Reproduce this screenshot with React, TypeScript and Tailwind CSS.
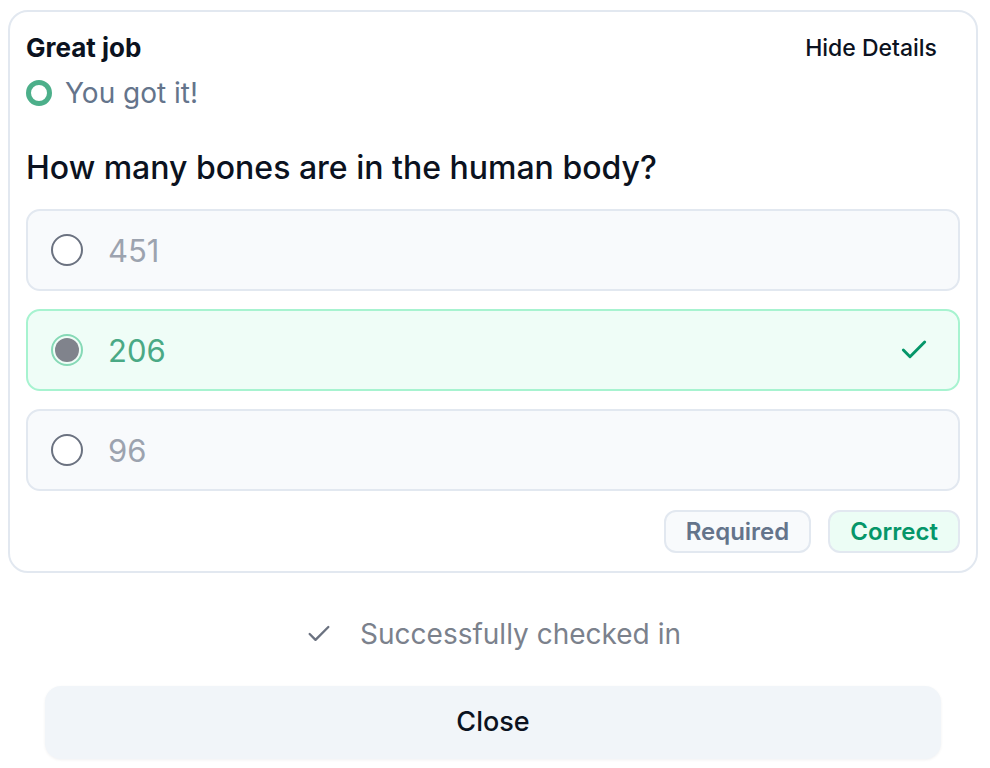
import React from 'react';
import { Check } from 'lucide-react';

const options = [
  { id: '451', label: '451' },
  { id: '206', label: '206' },
  { id: '96', label: '96' },
];

export default function App() {
  const selected = '206';

  return (
    <div className="min-h-screen bg-white pl-[8px] pr-[12px] pt-[10px]" style={{ fontFamily: 'Inter, "Noto Sans", sans-serif' }}>
      <div className="rounded-[20px] border-2 border-[#e2e8f0] px-[16px] pb-[18px] pt-[18px]">
        <div className="flex items-start justify-between">
          <div>
            <h2 className="text-[26px] font-bold leading-[36px] text-[#0b1220]">Great job</h2>
            <div className="mt-[10px] flex items-center gap-[13px]">
              <span className="inline-block h-[26px] w-[26px] rounded-full border-[5px] border-[#4caf8a]" />
              <span className="text-[28px] leading-[34px] text-[#64748b]">You got it!</span>
            </div>
          </div>
          <button type="button" className="mr-[23px] text-[23px] font-medium leading-[36px] text-[#0b1220]">
            Hide Details
          </button>
        </div>

        <p className="mt-[38px] text-[32px] font-medium leading-[40px] text-[#0b1220]">How many bones are in the human body?</p>

        <div className="mt-[21px] flex flex-col gap-[18px]">
          {options.map((option) => {
            const active = option.id === selected;
            return (
              <div
                key={option.id}
                className={`flex h-[82px] items-center rounded-[14px] border-2 pl-[23px] pr-[28px] ${
                  active ? 'border-[#a7f3d0] bg-[#effdf7]' : 'border-[#e2e8f0] bg-[#f8fafc]'
                }`}
              >
                {active ? (
                  <span className="flex h-[32px] w-[32px] items-center justify-center rounded-full border-2 border-[#86d9b6]">
                    <span className="h-[24px] w-[24px] rounded-full bg-[#80838c]" />
                  </span>
                ) : (
                  <span className="h-[32px] w-[32px] rounded-full border-2 border-[#6b7280] bg-white" />
                )}
                <span className={`ml-[25px] text-[31px] leading-none ${active ? 'text-[#4aa985]' : 'text-[#9ca3af]'}`}>
                  {option.label}
                </span>
                {active && <Check className="ml-auto text-[#059669]" size={32} strokeWidth={2.2} />}
              </div>
            );
          })}
        </div>

        <div className="mt-[19px] flex justify-end gap-[17px]">
          <span className="flex h-[43px] items-center rounded-[12px] border-2 border-[#e2e8f0] bg-[#f8fafc] px-[20px] text-[24px] font-semibold text-[#64748b]">
            Required
          </span>
          <span className="flex h-[43px] items-center rounded-[12px] border-2 border-[#e2e8f0] bg-[#ecfdf5] px-[20px] text-[24px] font-semibold text-[#059669]">
            Correct
          </span>
        </div>
      </div>

      <div className="mt-[43px] flex items-center justify-center gap-[27px] text-[#6b7280]">
        <Check size={28} strokeWidth={2} className="text-[#6b7280]" />
        <span className="text-[28px] leading-[36px] text-[#7b818c]">Successfully checked in</span>
      </div>

      <div className="mt-[34px] px-[37px]">
        <button
          type="button"
          className="flex h-[73px] w-full items-center justify-center rounded-[16px] bg-[#f1f5f9] text-[27px] font-medium text-[#0b1220] shadow-[0_1px_3px_rgba(15,23,42,0.06)]"
        >
          Close
        </button>
      </div>
    </div>
  );
}
